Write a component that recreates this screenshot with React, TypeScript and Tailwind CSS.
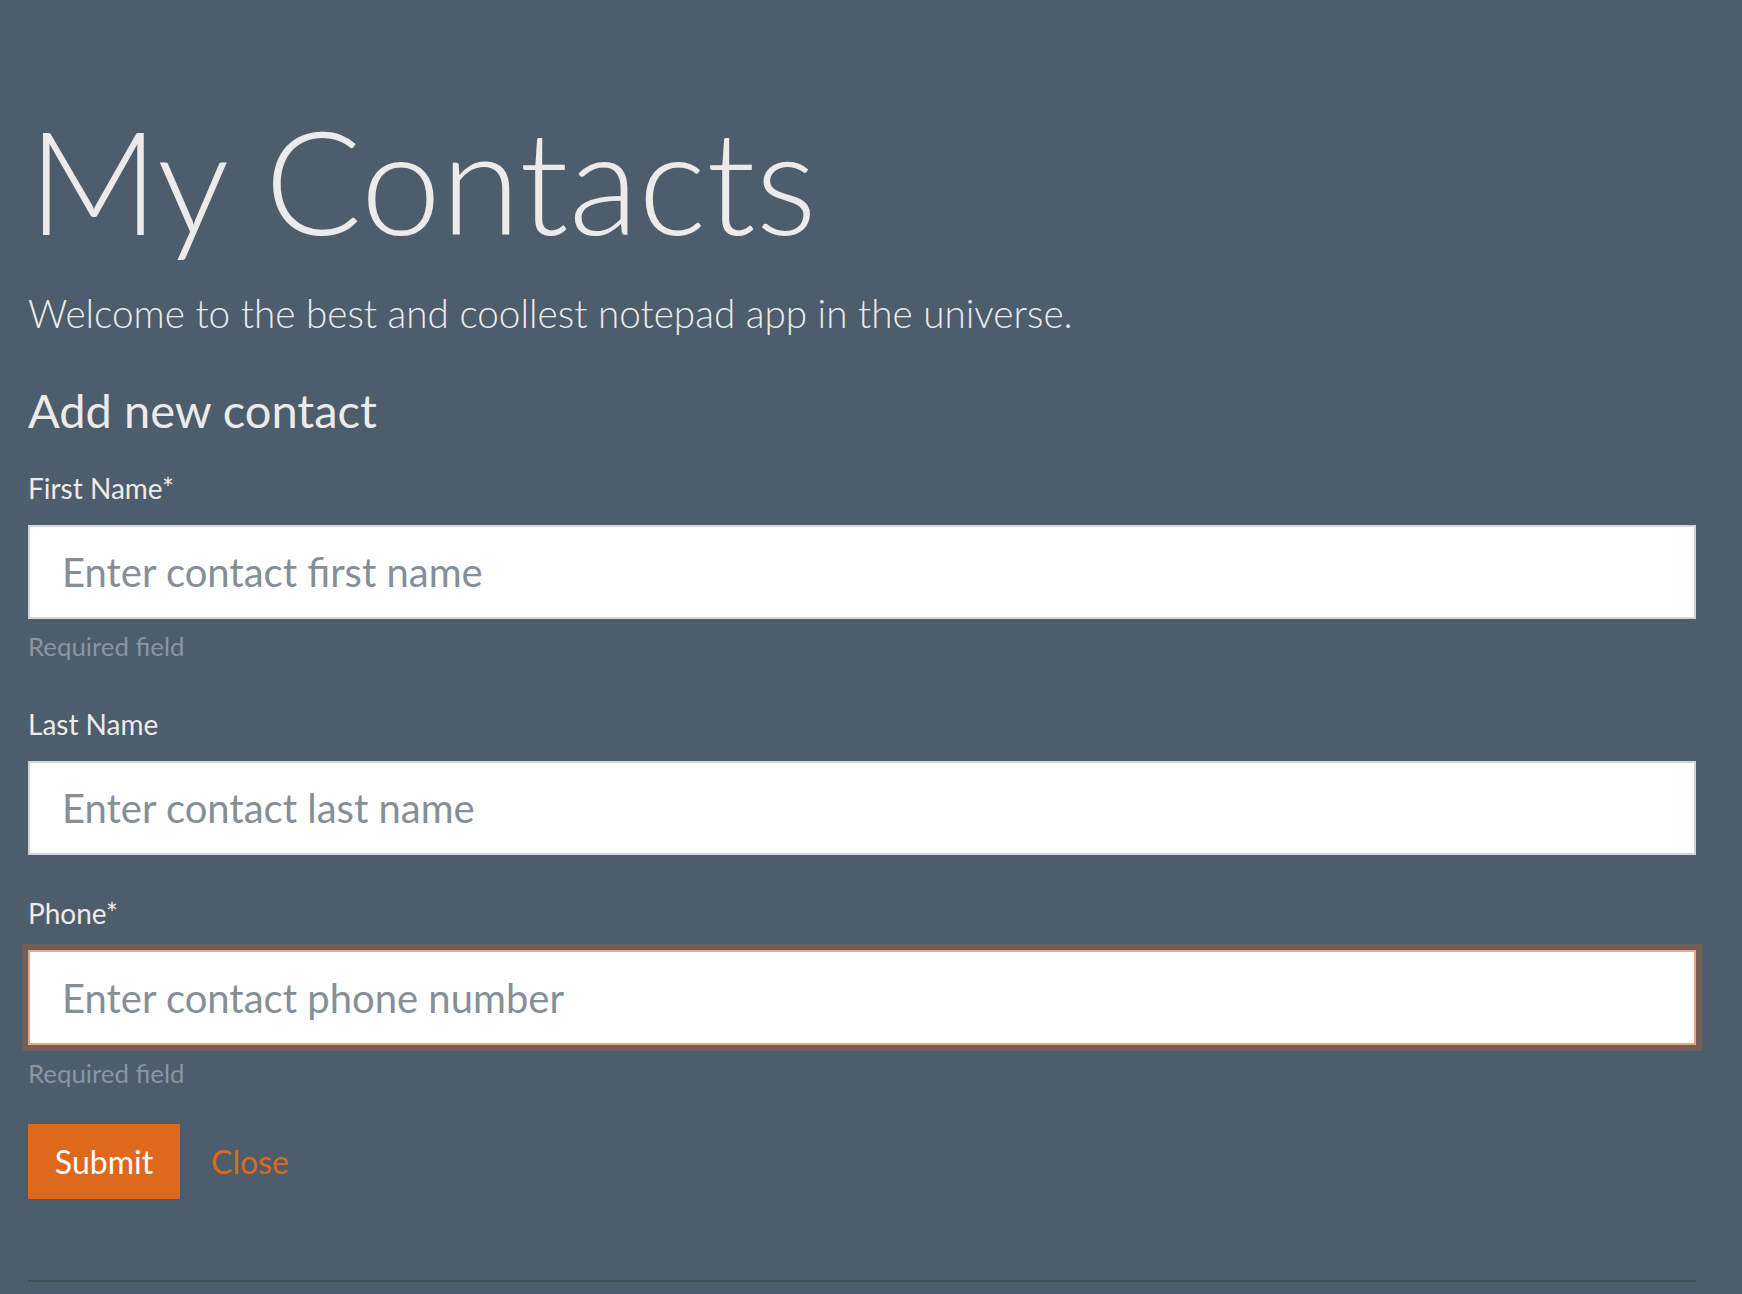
import React from "react";

const font = { fontFamily: "Lato, 'Noto Sans', sans-serif" };

function Label({ children, className = "" }: { children: React.ReactNode; className?: string }) {
  return (
    <label className={`block text-[28px] leading-[40.5px] text-[#ebebeb] ${className}`}>{children}</label>
  );
}

function Help({ className = "" }: { className?: string }) {
  return <div className={`text-[25.8px] leading-[36px] text-[#8a96a2] ${className}`}>Required field</div>;
}

export default function App() {
  return (
    <div className="min-h-[1294px] w-full bg-[#4e5d6c] text-[#ebebeb]" style={font}>
      <div className="pl-[28px] pr-[46px] pt-[94px]">
        <h1 className="text-[144px] font-light leading-[1.2] text-[#ebebeb]">My Contacts</h1>
        <p className="mt-[23px] text-[38.7px] font-light leading-[46.8px] text-[#ebebeb]">
          Welcome to the best and coollest notepad app in the universe.
        </p>
        <h2 className="mt-[46px] text-[47px] font-normal leading-[54px] text-[#ebebeb]">Add new contact</h2>

        <form className="mt-[31px]" onSubmit={(e) => e.preventDefault()}>
          <Label>First Name*</Label>
          <input
            className="mt-[17px] block h-[94px] w-full border-2 border-[#d0d5dc] bg-white px-[32px] text-[40px] text-[#495057] outline-none placeholder:text-[#868e96]"
            placeholder="Enter contact first name"
          />
          <Help className="mt-[9px]" />

          <Label className="mt-[40px]">Last Name</Label>
          <input
            className="mt-[16px] block h-[94px] w-full border-2 border-[#d0d5dc] bg-white px-[32px] text-[40px] text-[#495057] outline-none placeholder:text-[#868e96]"
            placeholder="Enter contact last name"
          />

          <Label className="mt-[38px]">Phone*</Label>
          <input
            className="mt-[17px] block h-[95px] w-full border-2 border-[#f0a77f] bg-white px-[32px] text-[40px] text-[#495057] shadow-[0_0_0_6px_rgba(223,105,26,0.25)] outline-none placeholder:text-[#868e96]"
            placeholder="Enter contact phone number"
          />
          <Help className="mt-[10px]" />

          <div className="mt-[33px] flex items-center">
            <button
              type="submit"
              className="flex h-[75px] w-[152px] items-center justify-center bg-[#df691a] text-[32px] text-white"
            >
              Submit
            </button>
            <button type="button" className="ml-[31px] text-[32px] text-[#df691a]">
              Close
            </button>
          </div>
        </form>

        <div className="mt-[81px] h-[2px] w-full bg-[#3e4e57]" />
      </div>
    </div>
  );
}
